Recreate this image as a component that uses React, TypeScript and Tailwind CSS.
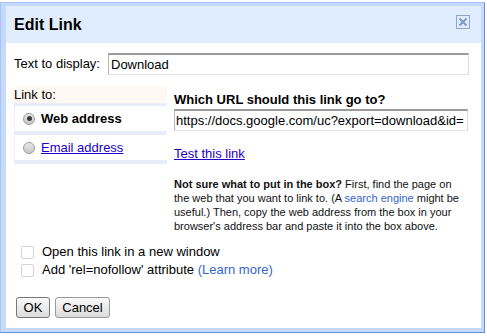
import React from "react";

function Radio({ checked }: { checked?: boolean }) {
  return (
    <span className="w-[12px] h-[12px] rounded-full border border-[#9a9a9a] bg-gradient-to-b from-[#e8e8e8] to-[#c8c8c8] flex items-center justify-center shrink-0">
      {checked ? <span className="w-[5px] h-[5px] rounded-full bg-[#3a3a3a]" /> : null}
    </span>
  );
}

function Checkbox() {
  return <span className="w-[13px] h-[13px] border border-[#d4d4d4] rounded-[2px] bg-white shrink-0" />;
}

export default function App() {
  return (
    <div className="w-[487px] h-[336px] bg-white overflow-hidden font-['Liberation_Sans',Arial,sans-serif] text-black">
      <div className="mt-[2px] w-[485px] h-[331px] border border-l-[#a9c2ee] border-t-[#a9c2ee] border-r-[#6a8fd6] border-b-[#6a8fd6] bg-[#c3d9ff] pl-[5px] pt-[3px] pr-[3px] pb-[4px] flex flex-col">
        <div className="h-[37px] bg-[#e0edfe] flex items-center justify-between pl-[8px] pr-[11px] shrink-0">
          <span className="text-[16px] font-bold leading-none">Edit Link</span>
          <span className="self-start mt-[9px] w-[14px] h-[14px] border border-[#8ea3d3] flex items-center justify-center">
            <svg width="10" height="10" viewBox="0 0 10 10">
              <path d="M1.5 1.5 L8.5 8.5 M8.5 1.5 L1.5 8.5" stroke="#8196c9" strokeWidth="2" />
            </svg>
          </span>
        </div>
        <div className="flex-1 bg-white pl-[8px] pr-[12px] pt-[10px] text-[13px]">
          <div className="flex items-center">
            <span className="leading-[16px]">Text to display:</span>
            <div className="ml-auto w-[361px] h-[22px] border border-[#b5b5b5] border-t-2 border-t-[#9a9a9a] border-b-[#e3e3e3] border-r-[#dcdcdc] flex items-center pl-[2px]">
              Download
            </div>
          </div>

          <div className="flex mt-[11px]">
            <div className="w-[153px] shrink-0">
              <div className="h-[17px] leading-[17px] bg-[#fff8f3]">Link to:</div>
              <div className="bg-[#e8eef9] pt-[3px] pl-[1px] pb-[4px] flex flex-col gap-[4px]">
                <div className="h-[25px] bg-white flex items-center pl-[8px]">
                  <Radio checked />
                  <span className="ml-[6px] font-bold">Web address</span>
                </div>
                <div className="h-[25px] bg-white flex items-center pl-[8px]">
                  <Radio />
                  <span className="ml-[6px] text-[#2200cc] underline">Email address</span>
                </div>
              </div>
            </div>
            <div className="ml-[7px] flex-1">
              <div className="mt-[6px] leading-[16px] font-bold">Which URL should this link go to?</div>
              <div className="mt-[1px] w-[294px] h-[22px] border border-[#b5b5b5] border-t-2 border-t-[#9a9a9a] border-b-[#e3e3e3] border-r-[#dcdcdc] flex items-center pl-[1px] overflow-hidden whitespace-nowrap">
                https://docs.google.com/uc?export=download&amp;id=
              </div>
              <div className="mt-[15px] leading-[16px] text-[#2200cc] underline">Test this link</div>
              <div className="mt-[15px] text-[11px] leading-[14px] whitespace-nowrap text-[#111]">
                <div>
                  <span className="font-bold">Not sure what to put in the box?</span> First, find the page on
                </div>
                <div>
                  the web that you want to link to. (A <span className="text-[#3366cc]">search engine</span> might be
                </div>
                <div>useful.) Then, copy the web address from the box in your</div>
                <div>browser's address bar and paste it into the box above.</div>
              </div>
            </div>
          </div>

          <div className="mt-[10px]">
            <div className="h-[18px] flex items-center pl-[7px]">
              <Checkbox />
              <span className="ml-[8px]">Open this link in a new window</span>
            </div>
            <div className="h-[18px] flex items-center pl-[7px]">
              <Checkbox />
              <span className="ml-[8px]">
                Add 'rel=nofollow' attribute <span className="text-[#3366cc]">(Learn more)</span>
              </span>
            </div>
          </div>

          <div className="mt-[18px] ml-[2px] flex gap-[5px]">
            <button className="w-[34px] h-[21px] border border-[#777] rounded-[3px] bg-gradient-to-b from-[#fafafa] to-[#dcdcdc] text-[13px] leading-none">
              OK
            </button>
            <button className="w-[55px] h-[21px] border border-[#999] rounded-[3px] bg-gradient-to-b from-[#fafafa] to-[#dcdcdc] text-[13px] leading-none">
              Cancel
            </button>
          </div>
        </div>
      </div>
    </div>
  );
}
